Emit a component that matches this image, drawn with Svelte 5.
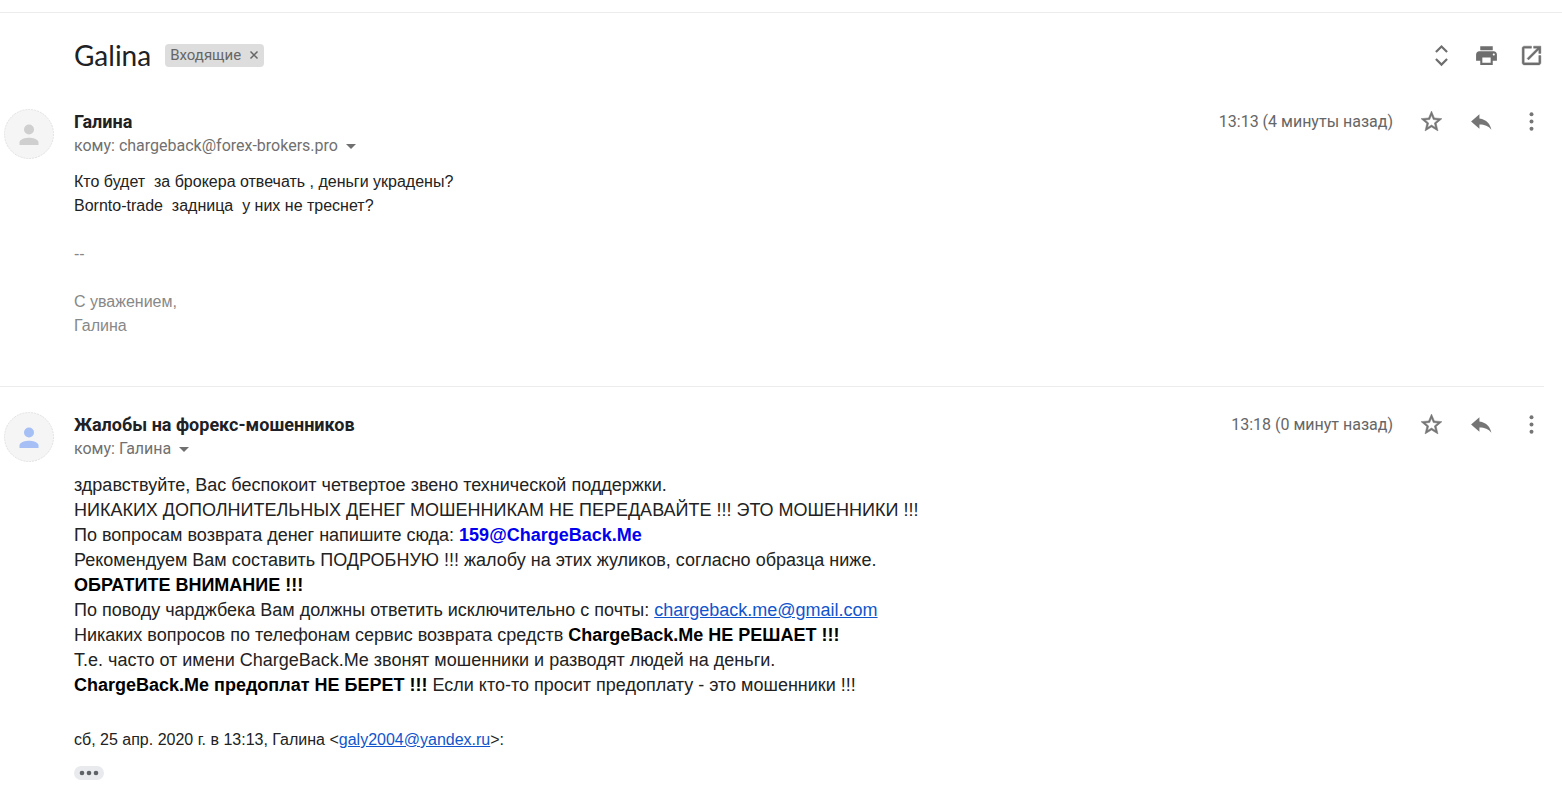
<script>
  let starred = $state([false, false]);
</script>

{#snippet avatar(color)}
  <svg class="avatar" viewBox="0 0 50 50" aria-hidden="true">
    <circle cx="25" cy="25" r="24.5" fill="#f5f5f5" stroke="#e2e2e2" stroke-dasharray="2 1" />
    <circle cx="25" cy="20.500" r="5" fill={color} />
    <path d="M15.500 36v-2.600c0-3.300 6.300-4.600 9.500-4.600s9.500 1.300 9.500 4.600V36z" fill={color} />
  </svg>
{/snippet}

{#snippet caret()}
  <svg class="caret" viewBox="0 0 10 5" aria-hidden="true"><path d="M0 0h10L5 5z" /></svg>
{/snippet}

{#snippet actions(i, time)}
  <div class="actions">
    <time>{time}</time>
    <button aria-label="Пометить" aria-pressed={starred[i]} onclick={() => (starred[i] = !starred[i])}>
      <svg viewBox="0 0 24 24">
        {#if starred[i]}
          <path d="M12 17.270L18.180 21l-1.640-7.030L22 9.240l-7.190-.61L12 2 9.190 8.630 2 9.240l5.460 4.730L5.820 21z" />
        {:else}
          <path d="M22 9.240l-7.190-.62L12 2 9.190 8.630 2 9.240l5.460 4.730L5.820 21 12 17.270 18.180 21l-1.630-7.030L22 9.240zM12 15.400l-3.760 2.270 1-4.280-3.320-2.880 4.380-.38L12 6.100l1.710 4.040 4.380.38-3.320 2.880 1 4.280L12 15.400z" stroke="currentColor" stroke-width=".5" />
        {/if}
      </svg>
    </button>
    <button aria-label="Ответить">
      <svg viewBox="0 0 24 24"><path d="M10 9V5l-8 7 8 7v-4.100c5 0 8.700 1.300 11.500 5.100-1-5.500-4.500-10-11.500-11z" /></svg>
    </button>
    <button aria-label="Ещё">
      <svg viewBox="0 0 24 24">
        <circle cx="12" cy="5" r="1.900" />
        <circle cx="12" cy="12" r="1.900" />
        <circle cx="12" cy="19" r="1.900" />
      </svg>
    </button>
  </div>
{/snippet}

<main>
  <header>
    <h1>Galina</h1>
    <span class="label">
      Входящие
      <button aria-label="Удалить ярлык">
        <svg viewBox="0 0 10 10"><path d="M1.500 1.500l7 7M8.500 1.500l-7 7" /></svg>
      </button>
    </span>
    <div class="tools">
      <button aria-label="Развернуть все">
        <svg viewBox="0 0 24 24"><path d="M12 4.800L16.600 9.400l1.500-1.500L12 1.800 5.900 7.900l1.500 1.500zM12 19.200L7.400 14.600l-1.500 1.500L12 22.200l6.100-6.100-1.500-1.500z" /></svg>
      </button>
      <button aria-label="Напечатать">
        <svg viewBox="0 0 24 24"><path d="M19 8H5c-1.660 0-3 1.340-3 3v6h4v4h12v-4h4v-6c0-1.660-1.340-3-3-3zm-3 11H8v-5h8v5zm3-7c-.55 0-1-.45-1-1s.45-1 1-1 1 .45 1 1-.45 1-1 1zM18 3H6v4h12V3z" /></svg>
      </button>
      <button aria-label="В новом окне">
        <svg viewBox="0 0 24 24"><path d="M19 19H5V5h7V3H5c-1.110 0-2 .9-2 2v14c0 1.100.89 2 2 2h14c1.100 0 2-.9 2-2v-7h-2v7zM14 3v2h3.590l-9.830 9.830 1.410 1.410L19 6.410V10h2V3h-7z" stroke="currentColor" stroke-width=".4" /></svg>
      </button>
    </div>
  </header>

  <article>
    {@render avatar('#cfcfcf')}
    <div class="content">
      <div class="head">
        <div>
          <h2>Галина</h2>
          <button class="recipient">кому: chargeback@forex-brokers.pro {@render caret()}</button>
        </div>
        {@render actions(0, '13:13 (4 минуты назад)')}
      </div>
      <div class="body">
        <p>Кто будет&nbsp; за брокера отвечать , деньги украдены?</p>
        <p>Bornto-trade&nbsp; задница&nbsp; у них не треснет?</p>
        <br />
        <div class="signature">
          <p>--</p>
          <br />
          <p>С уважением,</p>
          <p>Галина</p>
        </div>
      </div>
    </div>
  </article>

  <article>
    {@render avatar('#a6c0f5')}
    <div class="content">
      <div class="head">
        <div>
          <h2>Жалобы на форекс-мошенников</h2>
          <button class="recipient">кому: Галина {@render caret()}</button>
        </div>
        {@render actions(1, '13:18 (0 минут назад)')}
      </div>
      <div class="body large">
        <p>здравствуйте, Вас беспокоит четвертое звено технической поддержки.</p>
        <p>НИКАКИХ ДОПОЛНИТЕЛЬНЫХ ДЕНЕГ МОШЕННИКАМ НЕ ПЕРЕДАВАЙТЕ !!! ЭТО МОШЕННИКИ !!!</p>
        <p>По вопросам возврата денег напишите сюда: <b class="blue">159@ChargeBack.Me</b></p>
        <p>Рекомендуем Вам составить ПОДРОБНУЮ !!! жалобу на этих жуликов, согласно образца ниже.</p>
        <p><b>ОБРАТИТЕ ВНИМАНИЕ !!!</b></p>
        <p>По поводу чарджбека Вам должны ответить исключительно с почты: <a href="mailto:chargeback.me@gmail.com">chargeback.me@gmail.com</a></p>
        <p>Никаких вопросов по телефонам сервис возврата средств <b>ChargeBack.Me НЕ РЕШАЕТ !!!</b></p>
        <p>Т.е. часто от имени ChargeBack.Me звонят мошенники и разводят людей на деньги.</p>
        <p><b>ChargeBack.Me предоплат НЕ БЕРЕТ !!!</b> Если кто-то просит предоплату - это мошенники !!!</p>
      </div>
      <div class="quote">
        <p>сб, 25 апр. 2020 г. в 13:13, Галина &lt;<a href="mailto:galy2004@yandex.ru">galy2004@yandex.ru</a>&gt;:</p>
        <button class="more" aria-label="Показать скрытый текст">
          <svg viewBox="0 0 20 6">
            <circle cx="3" cy="3" r="2.300" />
            <circle cx="10" cy="3" r="2.300" />
            <circle cx="17" cy="3" r="2.300" />
          </svg>
        </button>
      </div>
    </div>
  </article>
</main>

<style>
  :global(body) {
    background: #fff;
    color: #222;
    font-family: Roboto, "Liberation Sans", sans-serif;
  }

  main {
    margin-top: 12px;
    border-top: 1px solid #ececec;
  }

  h1,
  h2,
  p {
    margin: 0;
  }

  button {
    padding: 0;
    border: 0;
    background: none;
    color: inherit;
    font: inherit;
    cursor: pointer;
  }

  svg {
    display: block;
    fill: currentColor;
  }

  header {
    display: flex;
    align-items: center;
    padding: 26px 8px 13px 74px;
  }

  h1 {
    font-family: Lato, sans-serif;
    font-size: 28px;
    font-weight: 400;
    line-height: 32px;
    color: #202124;
  }

  .label {
    display: flex;
    align-items: center;
    gap: 8px;
    height: 23px;
    margin-left: 14px;
    padding: 0 5px;
    border-radius: 4px;
    background: #ddd;
    color: #666;
    font-size: 15px;
  }

  .label svg {
    width: 10px;
    height: 10px;
    stroke: #666;
    stroke-width: 1.5;
  }

  .tools {
    display: flex;
    margin-left: auto;
    color: #6e6e6e;
  }

  .tools button {
    width: 45px;
  }

  .tools svg,
  .actions svg {
    width: 25px;
    height: 25px;
    margin: 0 auto;
  }

  article {
    display: flex;
    gap: 20px;
    padding: 25px 0 48px 4px;
  }

  article + article {
    margin-right: 18px;
    padding-bottom: 14px;
    border-top: 1px solid #ececec;
  }

  .avatar {
    flex: none;
    width: 50px;
    height: 50px;
  }

  .content {
    flex: 1;
    min-width: 0;
  }

  .head {
    display: flex;
    justify-content: space-between;
    align-items: flex-start;
    margin-bottom: 12px;
    margin-right: 6px;
  }

  article + article .head {
    margin-right: -12px;
  }

  h2 {
    font-size: 18px;
    font-weight: 700;
    line-height: 25px;
    color: #202124;
  }

  .recipient {
    display: flex;
    align-items: center;
    gap: 8px;
    color: #707070;
    font-size: 16px;
    line-height: 24px;
  }

  .caret {
    width: 10px;
    height: 5px;
  }

  .actions {
    display: flex;
    align-items: center;
    color: #757575;
  }

  .actions time {
    margin-right: 13px;
    color: #666;
    font-size: 16px;
    line-height: 24px;
  }

  .actions button {
    width: 50px;
  }

  .body,
  .quote {
    font-family: "Liberation Sans", Arial, sans-serif;
    font-size: 16px;
    line-height: 24px;
  }

  .signature {
    color: #888;
  }

  .large {
    font-size: 18px;
    line-height: 25px;
  }

  b {
    color: #000;
  }

  .blue {
    color: #00e;
  }

  a {
    color: #15c;
  }

  .quote {
    margin-top: 30px;
  }

  .more {
    display: flex;
    align-items: center;
    justify-content: center;
    width: 30px;
    height: 14px;
    margin-top: 14px;
    border-radius: 7px;
    background: #e8eaed;
    color: #5f6368;
  }

  .more svg {
    width: 20px;
    height: 6px;
  }
</style>
